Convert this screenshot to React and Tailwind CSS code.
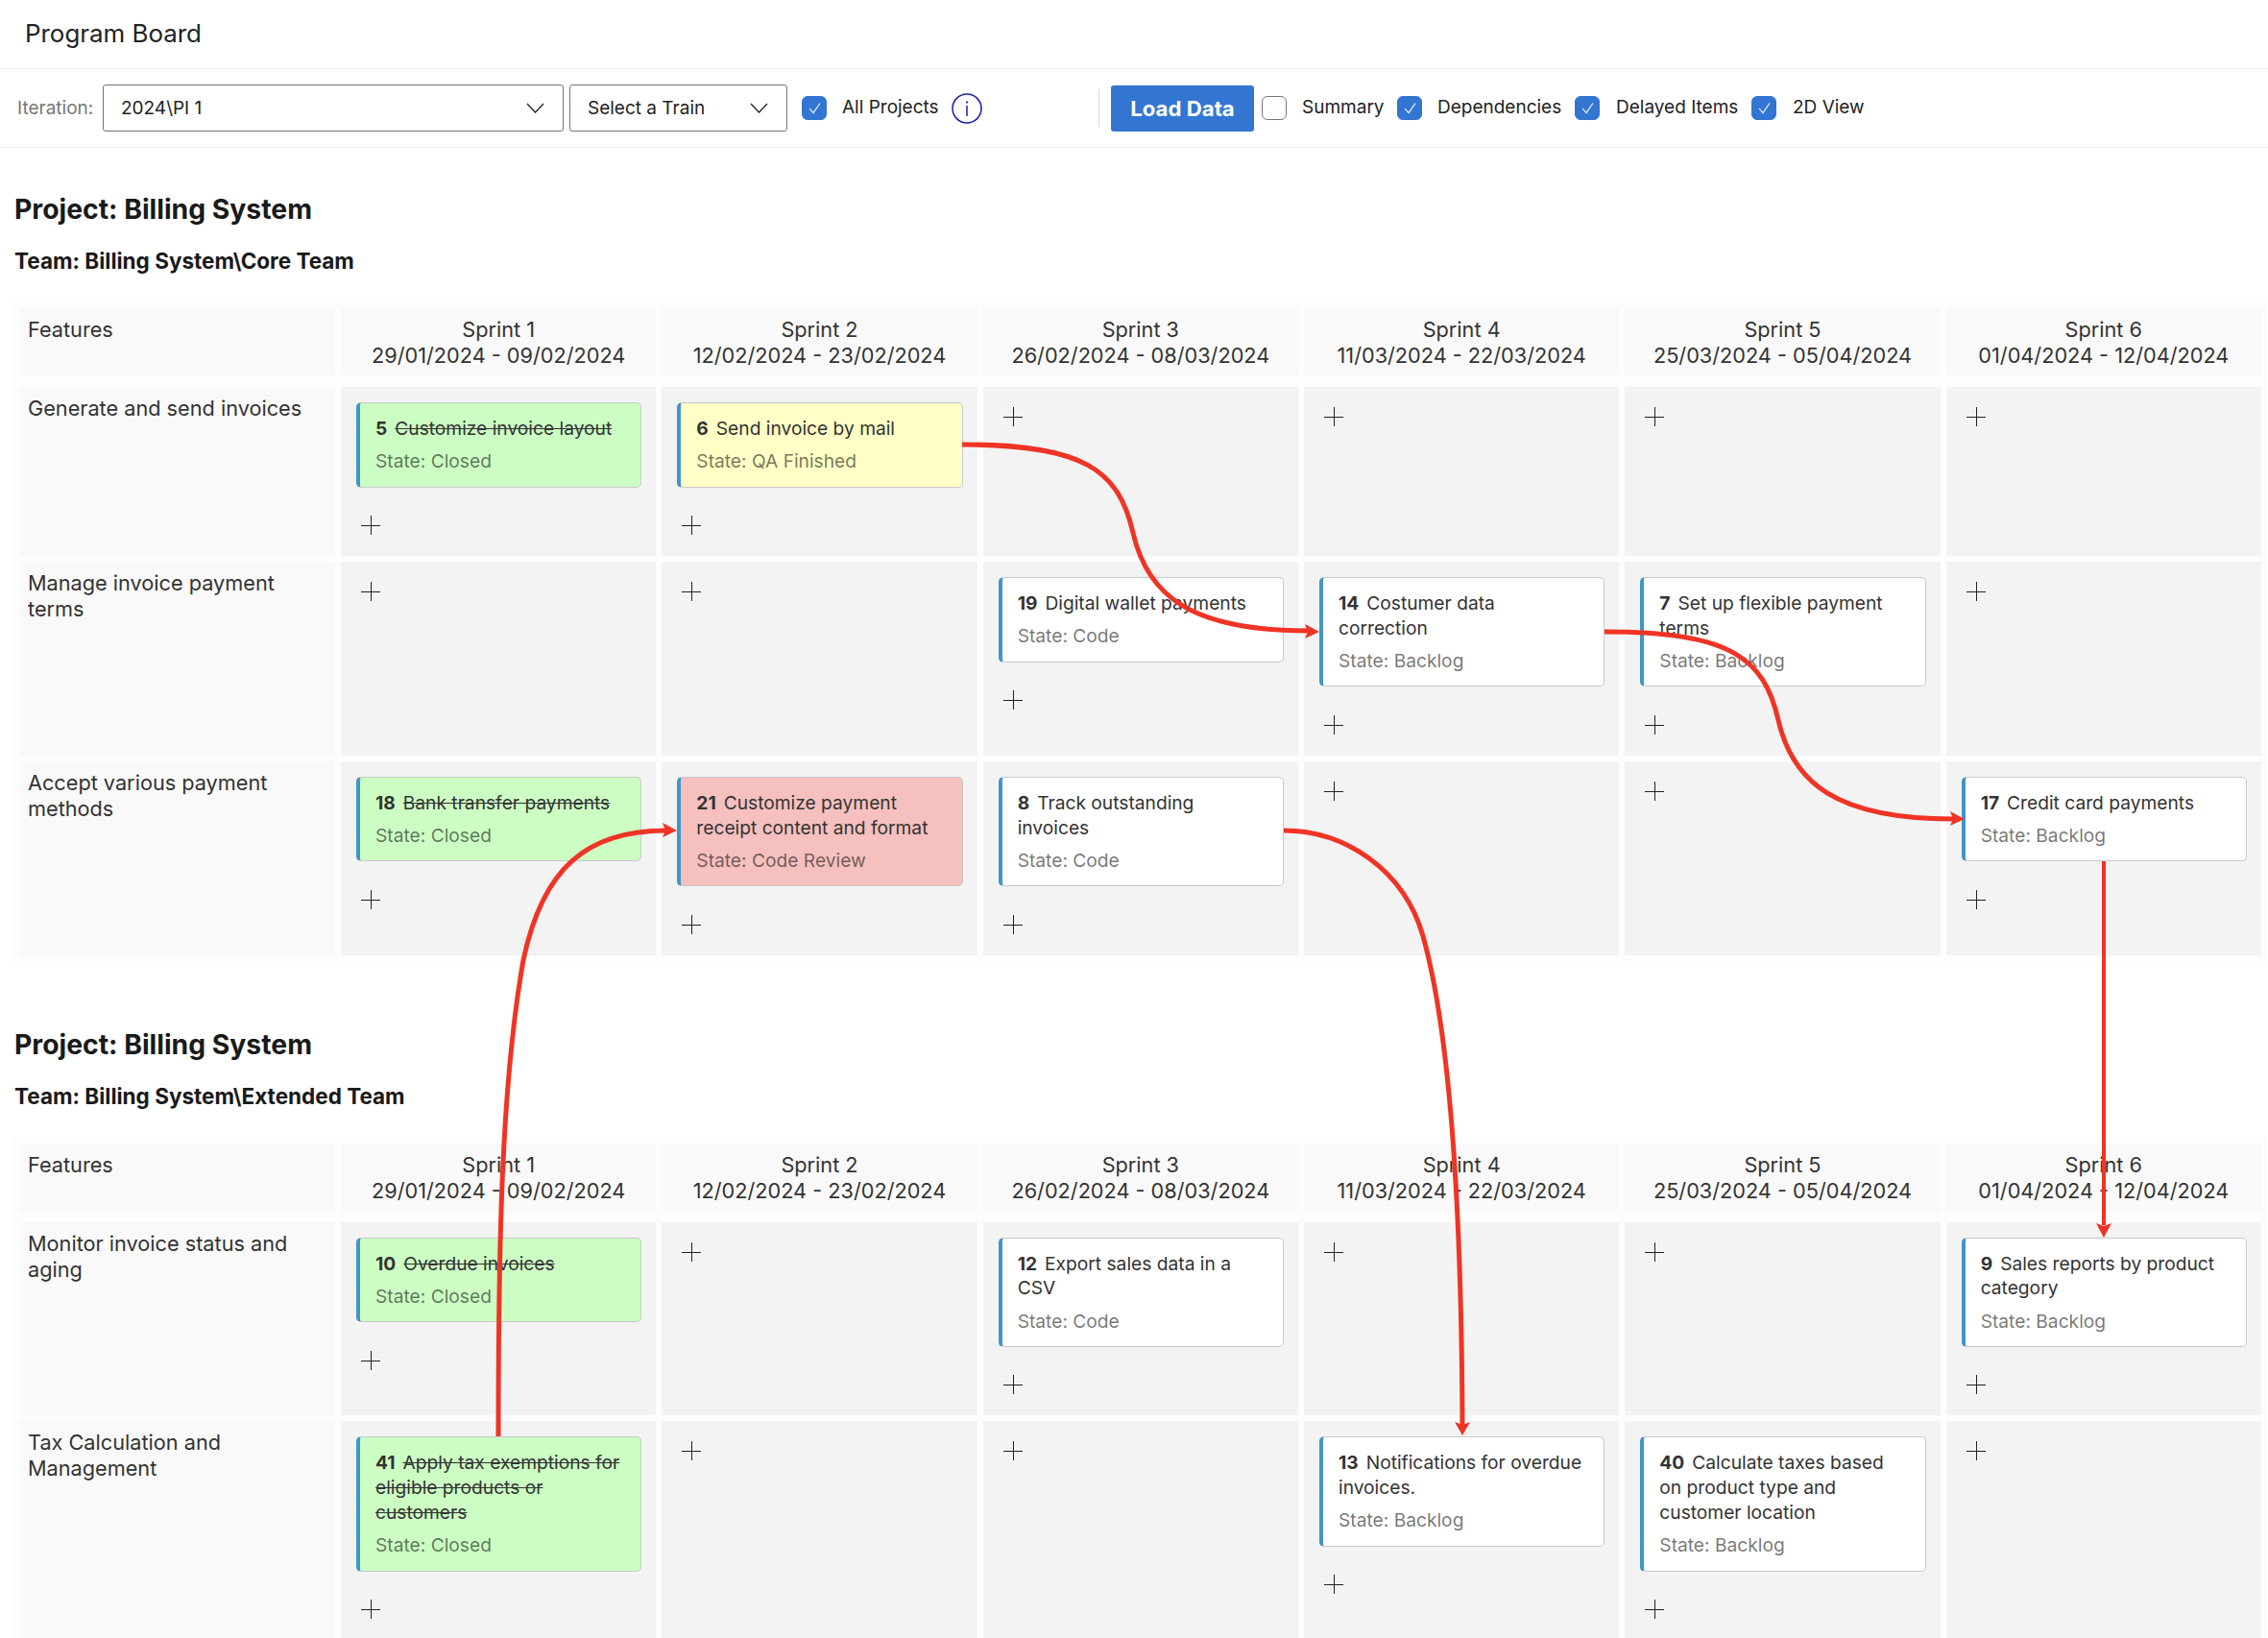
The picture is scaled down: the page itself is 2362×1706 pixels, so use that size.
import React from 'react';

const SPRINTS = [
  ['Sprint 1', '29/01/2024 - 09/02/2024'],
  ['Sprint 2', '12/02/2024 - 23/02/2024'],
  ['Sprint 3', '26/02/2024 - 08/03/2024'],
  ['Sprint 4', '11/03/2024 - 22/03/2024'],
  ['Sprint 5', '25/03/2024 - 05/04/2024'],
  ['Sprint 6', '01/04/2024 - 12/04/2024'],
];

const CORE_ROWS = [
  {
    name: 'Generate and send invoices',
    cells: [
      { id: 5, title: 'Customize invoice layout', state: 'Closed', tone: 'green' },
      { id: 6, title: 'Send invoice by mail', state: 'QA Finished', tone: 'yellow' },
      null, null, null, null,
    ],
  },
  {
    name: 'Manage invoice payment terms',
    cells: [
      null, null,
      { id: 19, title: 'Digital wallet payments', state: 'Code' },
      { id: 14, title: 'Costumer data correction', state: 'Backlog' },
      { id: 7, title: 'Set up flexible payment terms', state: 'Backlog' },
      null,
    ],
  },
  {
    name: 'Accept various payment methods',
    cells: [
      { id: 18, title: 'Bank transfer payments', state: 'Closed', tone: 'green' },
      { id: 21, title: 'Customize payment receipt content and format', state: 'Code Review', tone: 'red' },
      { id: 8, title: 'Track outstanding invoices', state: 'Code' },
      null, null,
      { id: 17, title: 'Credit card payments', state: 'Backlog' },
    ],
  },
];

const EXTENDED_ROWS = [
  {
    name: 'Monitor invoice status and aging',
    cells: [
      { id: 10, title: 'Overdue invoices', state: 'Closed', tone: 'green' },
      null,
      { id: 12, title: 'Export sales data in a CSV', state: 'Code' },
      null, null,
      { id: 9, title: 'Sales reports by product category', state: 'Backlog' },
    ],
  },
  {
    name: 'Tax Calculation and Management',
    cells: [
      { id: 41, title: 'Apply tax exemptions for eligible products or customers', state: 'Closed', tone: 'green' },
      null, null,
      { id: 13, title: 'Notifications for overdue invoices.', state: 'Backlog' },
      { id: 40, title: 'Calculate taxes based on product type and customer location', state: 'Backlog' },
      null,
    ],
  },
];

const TONES = {
  green: 'bg-[#ccfec3]',
  yellow: 'bg-[#ffffc6]',
  red: 'bg-[#f5c0be]',
  white: 'bg-white',
};

const Check = ({ checked = true, className = '' }) => (
  <span
    className={`flex h-[25px] w-[26px] shrink-0 items-center justify-center rounded-[6px] border ${
      checked ? 'border-[#3376d2] bg-[#3376d2]' : 'border-[#767676] bg-white'
    } ${className}`}
  >
    {checked && (
      <svg width="15" height="15" viewBox="0 0 15 15" fill="none" stroke="white" strokeWidth="1.1">
        <path d="M2 8 L6 12.5 L13 2.5" />
      </svg>
    )}
  </span>
);

const Chevron = () => (
  <svg width="19" height="11" viewBox="0 0 19 11" fill="none" stroke="#222" strokeWidth="1.3">
    <path d="M1 1 L9.5 10 L18 1" />
  </svg>
);

const InfoIcon = ({ className }) => (
  <svg className={className} width="32" height="32" viewBox="0 0 32 32" fill="none" stroke="#1c1ca8" strokeWidth="1.5">
    <circle cx="16" cy="16" r="15" />
    <path d="M16 13 V24" />
    <path d="M16 8.5 V10.5" strokeWidth="1.8" />
  </svg>
);

const Select = ({ value, className }) => (
  <div className={`flex h-[49px] items-center justify-between rounded-[3px] border border-[#767676] bg-white pl-[18px] pr-[19px] text-[19px] text-[#222] ${className}`}>
    <span className="pt-[2px]">{value}</span>
    <Chevron />
  </div>
);

const AddButton = ({ alone }) => (
  <button className={`-ml-[1px] flex h-[32px] w-[32px] items-center justify-center ${alone ? '-mt-[1px]' : ''}`}>
    <svg width="20" height="20" viewBox="0 0 20 20" stroke="#222" strokeWidth="1">
      <path d="M0 10.5 H20 M10.5 0 V20" />
    </svg>
  </button>
);

const Card = ({ id, title, state, tone = 'white' }) => (
  <div className={`mb-[23.4px] rounded-[5px] border border-l-[4px] border-[#c9c9c9] border-l-[#4196c7] pb-[12.5px] pl-[16px] pr-[17px] pt-[14px] text-[19.2px] leading-[25.8px] ${TONES[tone]}`}>
    <div className="text-[#333]">
      <span className="mr-[8px] font-bold">{id}</span>
      <span className={tone === 'green' ? 'line-through' : ''}>{title}</span>
    </div>
    <div className="mt-[8.5px] text-black/55">State: {state}</div>
  </div>
);

const Board = ({ rows }) => (
  <div className="ml-[13px] mr-[1px] grid grid-cols-[329px_repeat(6,1fr)] gap-[6px] bg-[#fdfdfd] p-[7px] pr-[6px] text-[21.7px] leading-[27px] text-[#333]">
    <div className="mb-[6px] h-[70px] bg-[#f9f9f9] pl-[9px] pt-[9px]">Features</div>
    {SPRINTS.map(([name, dates]) => (
      <div key={name} className="mb-[6px] h-[70px] bg-[#f9f9f9] pt-[9px] text-center">
        <div>{name}</div>
        <div>{dates}</div>
      </div>
    ))}
    {rows.map((row) => (
      <React.Fragment key={row.name}>
        <div className="bg-[#f9f9f9] pl-[9px] pr-[24px] pt-[9px]">{row.name}</div>
        {row.cells.map((card, i) => (
          <div key={i} className="bg-[#f3f3f3] pb-[16px] pl-[16px] pr-[15px] pt-[16px]">
            {card && <Card {...card} />}
            <AddButton alone={!card} />
          </div>
        ))}
      </React.Fragment>
    ))}
  </div>
);

const Section = ({ team, rows, className }) => (
  <section className={className}>
    <h2 className="ml-[15px] text-[28.3px] font-bold leading-[36px] text-[#1a1a1a]">Project: Billing System</h2>
    <h3 className="mb-[27px] ml-[15px] mt-[21px] text-[22.5px] font-bold leading-[30px] text-[#1a1a1a]">Team: {team}</h3>
    <Board rows={rows} />
  </section>
);

// dependency arrows drawn over the board
const Links = () => (
  <svg className="pointer-events-none absolute left-0 top-0" width="2362" height="1706" fill="none" stroke="#ef3425" strokeWidth="5">
    <path d="M1002 463 C1130 463 1165 490 1180 555 C1195 620 1240 657 1362 657" />
    <path d="M1671 658 C1802 658 1837 685 1852 750 C1867 815 1912 853 2034 853" />
    <path d="M1337 865 C1400 865 1462 905 1482 975 C1510 1075 1522 1250 1523 1484" />
    <path d="M519 1496 C519 1300 522 1130 545 1000 C565 905 610 865 694 865" />
    <path d="M2191 897 V1276" strokeWidth="4" />
    <g fill="#ef3425" stroke="none">
      <path d="M1374 658 L1359 650 L1362 658 L1359 665 Z" />
      <path d="M2046 853 L2031 845 L2034 853 L2031 860 Z" />
      <path d="M705 865 L690 857 L693 865 L690 872 Z" />
      <path d="M1523 1495 L1515 1481 L1523 1484 L1531 1481 Z" />
      <path d="M2191 1289 L2183 1274 L2191 1277 L2199 1274 Z" />
    </g>
  </svg>
);

export default function App() {
  return (
    <div className="relative h-[1706px] w-[2362px] overflow-hidden bg-white font-['Inter',sans-serif] text-[#222]">
      <header className="flex h-[72px] items-center border-b border-[#ebebeb] pl-[26px] text-[25.9px]">Program Board</header>

      <div className="flex h-[82px] items-center border-b border-[#ebebeb] pl-[18px] text-[19px]">
        <span className="w-[89px] pt-[2px] text-[#777]">Iteration:</span>
        <Select value="2024\PI 1" className="w-[480px]" />
        <Select value="Select a Train" className="ml-[6px] w-[227px]" />
        <Check className="ml-[15px]" />
        <span className="ml-[16px] w-[102px] whitespace-nowrap">All Projects</span>
        <InfoIcon className="ml-[12px]" />
        <span className="ml-[121px] h-[39px] w-px bg-[#d8d8d8]" />
        <button className="ml-[12px] h-[48px] w-[149px] rounded-[3px] bg-[#3376d2] text-[22.2px] font-bold text-white">Load Data</button>
        <Check checked={false} className="ml-[8px]" />
        <span className="ml-[16px] w-[85px] whitespace-nowrap">Summary</span>
        <Check className="ml-[14px]" />
        <span className="ml-[16px] w-[129px] whitespace-nowrap">Dependencies</span>
        <Check className="ml-[14px]" />
        <span className="ml-[17px] w-[127px] whitespace-nowrap">Delayed Items</span>
        <Check className="ml-[14px]" />
        <span className="ml-[17px] whitespace-nowrap">2D View</span>
      </div>

      <Section team="Billing System\Core Team" rows={CORE_ROWS} className="pt-[46px]" />
      <Section team="Billing System\Extended Team" rows={EXTENDED_ROWS} className="pt-[68px]" />

      <Links />
    </div>
  );
}
